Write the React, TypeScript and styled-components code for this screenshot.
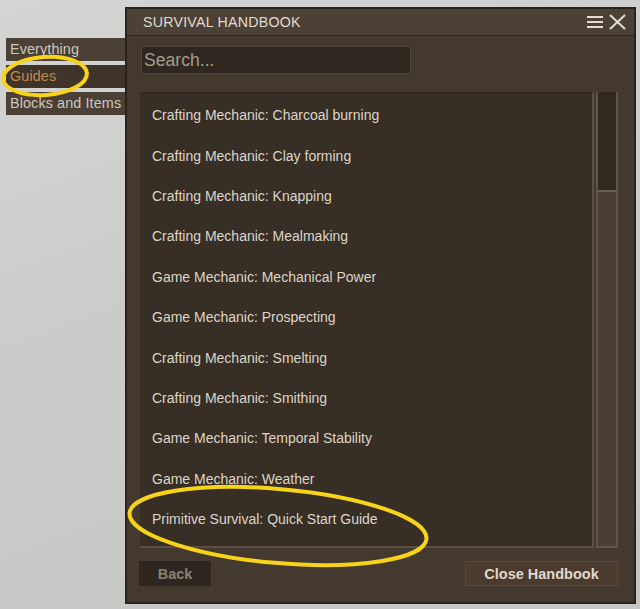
import React from "react";
import styled, { createGlobalStyle } from "styled-components";

const Global = createGlobalStyle`
  html, body { margin: 0; padding: 0; }
  body { font-family: "Liberation Sans", Arial, sans-serif; background: #c9c9c7; }
`;

const Page = styled.div`
  position: relative;
  width: 640px;
  height: 609px;
  overflow: hidden;
  background: linear-gradient(160deg, #d4d4d2 0%, #cbcbc9 45%, #c6c6c4 100%);
  display: flex;
  align-items: flex-start;
`;

const Tabs = styled.div`
  margin-top: 38px;
  margin-left: 6px;
  width: 119px;
  display: flex;
  flex-direction: column;
  gap: 4px;
`;

const Tab = styled.div<{ $active?: boolean }>`
  height: 23px;
  box-sizing: border-box;
  padding: 2px 0 0 4px;
  background: ${(p) => (p.$active ? "#3f3429" : "#4a4036")};
  color: ${(p) => (p.$active ? "#c28a50" : "#cfc8bc")};
  font-size: 14.4px;
  letter-spacing: 0.1px;
  line-height: 18px;
  white-space: nowrap;
`;

const Dialog = styled.div`
  margin-top: 7px;
  width: 511px;
  height: 597px;
  box-sizing: border-box;
  border: 2px solid #2a231c;
  background: #43392e;
  display: flex;
  flex-direction: column;
`;

const TitleBar = styled.div`
  height: 26px;
  flex: none;
  background: #4b4137;
  border-bottom: 1px solid #2d251f;
  display: flex;
  align-items: center;
  padding: 0 6px 0 16px;
`;

const Title = styled.div`
  flex: 1;
  color: #e2dacd;
  font-size: 14.2px;
  letter-spacing: 0.25px;
`;

const IconBtn = styled.span`
  display: inline-flex;
  margin-left: 4px;
`;

const Body = styled.div`
  flex: 1;
  display: flex;
  flex-direction: column;
  padding: 10px 16px 16px 12px;
`;

const Search = styled.div`
  margin-left: 2px;
  width: 270px;
  height: 28px;
  box-sizing: border-box;
  background: #2e261f;
  border: 1px solid #52473b;
  color: #a59c8f;
  font-size: 17.6px;
  line-height: 26px;
  padding-left: 2px;
`;

const ListRow = styled.div`
  margin-top: 18px;
  height: 456px;
  display: flex;
  gap: 2px;
  margin-left: 1px;
`;

const List = styled.div`
  width: 455px;
  box-sizing: border-box;
  background: #372e25;
  border-right: 2px solid #5a5044;
  border-bottom: 2px solid #5a5044;
  border-top: 1px solid #2c241d;
  padding-top: 2px;
`;

const Item = styled.div`
  height: 40.4px;
  display: flex;
  align-items: center;
  padding-left: 12px;
  color: #ddd5c9;
  font-size: 14px;
`;

const Scroll = styled.div`
  width: 22px;
  box-sizing: border-box;
  background: #32291f;
  border-left: 2px solid #5e554a;
  border-right: 2px solid #5e554a;
  border-bottom: 2px solid #5e554a;
  display: flex;
  flex-direction: column;
`;

const Thumb = styled.div`
  height: 98px;
  background: #31281f;
  border-bottom: 2px solid #6a6054;
`;

const Track = styled.div`
  flex: 1;
  background: #4a3f34;
`;

const Buttons = styled.div`
  margin-top: 13px;
  display: flex;
  justify-content: space-between;
`;

const Button = styled.div<{ $disabled?: boolean }>`
  height: 25px;
  box-sizing: border-box;
  display: flex;
  align-items: center;
  justify-content: center;
  font-weight: bold;
  font-size: 14.5px;
  width: ${(p) => (p.$disabled ? "72px" : "153px")};
  background: ${(p) => (p.$disabled ? "#2e251e" : "#4a3b2e")};
  border: 1px solid ${(p) => (p.$disabled ? "#2e251e" : "#574a3d")};
  color: ${(p) => (p.$disabled ? "#8a8177" : "#e0d8cc")};
`;

const Overlay = styled.svg`
  position: absolute;
  left: 0;
  top: 0;
  width: 640px;
  height: 609px;
  pointer-events: none;
`;

const items = [
  "Crafting Mechanic: Charcoal burning",
  "Crafting Mechanic: Clay forming",
  "Crafting Mechanic: Knapping",
  "Crafting Mechanic: Mealmaking",
  "Game Mechanic: Mechanical Power",
  "Game Mechanic: Prospecting",
  "Crafting Mechanic: Smelting",
  "Crafting Mechanic: Smithing",
  "Game Mechanic: Temporal Stability",
  "Game Mechanic: Weather",
  "Primitive Survival: Quick Start Guide",
];

export default function App() {
  return (
    <>
      <Global />
      <Page>
        <Tabs>
          <Tab>Everything</Tab>
          <Tab $active>Guides</Tab>
          <Tab>Blocks and Items</Tab>
        </Tabs>
        <Dialog>
          <TitleBar>
            <Title>SURVIVAL HANDBOOK</Title>
            <IconBtn>
              <svg width="18" height="16" viewBox="0 0 18 16">
                <g stroke="#e4dccf" strokeWidth="2">
                  <line x1="1" y1="3" x2="17" y2="3" />
                  <line x1="1" y1="8" x2="17" y2="8" />
                  <line x1="1" y1="13" x2="17" y2="13" />
                </g>
              </svg>
            </IconBtn>
            <IconBtn>
              <svg width="20" height="16" viewBox="0 0 20 16">
                <g stroke="#e4dccf" strokeWidth="2">
                  <line x1="2" y1="1" x2="17" y2="15" />
                  <line x1="17" y1="1" x2="2" y2="15" />
                </g>
              </svg>
            </IconBtn>
          </TitleBar>
          <Body>
            <Search>Search...</Search>
            <ListRow>
              <List>
                {items.map((t) => (
                  <Item key={t}>{t}</Item>
                ))}
              </List>
              <Scroll>
                <Thumb />
                <Track />
              </Scroll>
            </ListRow>
            <Buttons>
              <Button $disabled>Back</Button>
              <Button>Close Handbook</Button>
            </Buttons>
          </Body>
        </Dialog>
        <Overlay viewBox="0 0 640 609">
          <ellipse cx="45" cy="76" rx="42" ry="19" fill="none" stroke="#f7d31a" strokeWidth="4" transform="rotate(-4 45 76)" />
          <ellipse cx="278" cy="526" rx="149" ry="37" fill="none" stroke="#f7d31a" strokeWidth="4" transform="rotate(5 278 526)" />
        </Overlay>
      </Page>
    </>
  );
}
